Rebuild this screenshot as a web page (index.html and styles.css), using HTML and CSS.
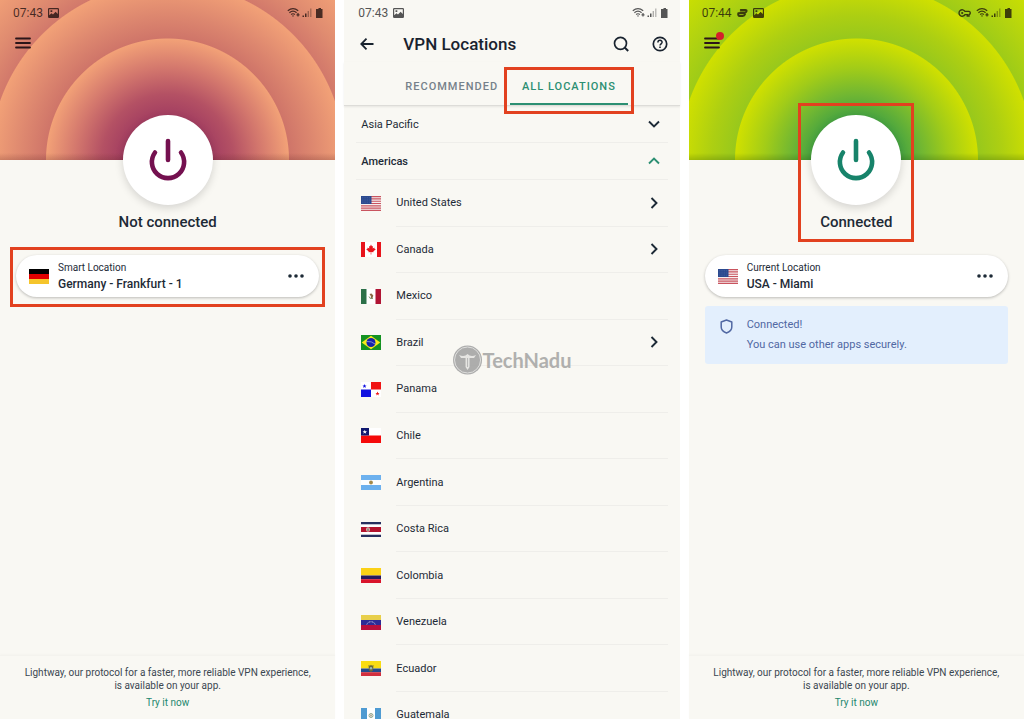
FILE: index.html
```html
<!DOCTYPE html>
<html lang="en">

<head>
    <meta charset="UTF-8">
    <meta name="viewport" content="width=device-width, initial-scale=1.0">
    <title>VPN Locations</title>
    <link rel="stylesheet" href="styles.css">
</head>

<body>
    <!-- Shared icons -->
    <svg class="sprite" aria-hidden="true">
        <symbol id="picture" viewBox="0 0 11 10">
            <path fill="currentColor" fill-rule="evenodd" d="M1.2 0H9.8Q11 0 11 1.200V8.800Q11 10 9.800 10H1.200Q0 10 0 8.800V1.200Q0 0 1.200 0ZM1.200 1.200V7.200L3.500 5.200L5 6.400L7.600 3.800L9.800 6V1.200ZM2.500 2.200H4.300V4H2.500Z" />
        </symbol>
        <symbol id="signals" viewBox="0 0 36 12">
            <g fill="none" stroke="currentColor" stroke-width="1.200">
                <path d="M0.800 3.800Q6 -0.400 11.200 3.800" />
                <path d="M2.400 5.700Q6 2.700 9.600 5.700" />
                <path d="M4.100 7.500Q6 6 7.900 7.500" />
                <path d="M11 6V9.500M9.500 7.800H12.500" />
            </g>
            <path fill="currentColor" d="M5 8.500H7L6 10ZM15.500 8.500H17V10H15.500ZM18 6.500H19.500V10H18Z" />
            <path fill="currentColor" opacity=".45" d="M20.600 4H22V10H20.600ZM23.200 1.500H24.400V10H23.200Z" />
            <path fill="currentColor" d="M30 2H31.500V1H34V2H35.500V11H29V2Z" />
        </symbol>
        <symbol id="menu" viewBox="0 0 16 12">
            <path d="M1 1.500H15M1 6H15M1 10.500H15" stroke="currentColor" stroke-width="1.800" stroke-linecap="round" />
        </symbol>
        <symbol id="power" viewBox="0 0 46 46">
            <path d="M23 4V23M10 15.500A16.100 16.100 0 1 0 36 15.500" fill="none" stroke="currentColor" stroke-width="4.600" stroke-linecap="round" />
        </symbol>
        <symbol id="dots" viewBox="0 0 16 4">
            <g fill="currentColor">
                <circle cx="2" cy="2" r="1.800" />
                <circle cx="8" cy="2" r="1.800" />
                <circle cx="14" cy="2" r="1.800" />
            </g>
        </symbol>
        <symbol id="right" viewBox="0 0 8 12">
            <path d="M1.500 1L6.500 6L1.500 11" fill="none" stroke="currentColor" stroke-width="1.900" />
        </symbol>
        <symbol id="down" viewBox="0 0 12 8">
            <path d="M1 1.500L6 6.500L11 1.500" fill="none" stroke="currentColor" stroke-width="1.900" />
        </symbol>
        <symbol id="flag-us" viewBox="0 0 20 15">
            <path fill="#f5eeee" d="M0 0H20V15H0Z" />
            <path stroke="#c9545f" stroke-width="1.150" d="M0 .6H20M0 2.900H20M0 5.200H20M0 7.500H20M0 9.800H20M0 12.100H20M0 14.400H20" />
            <path fill="#2b4a8f" d="M0 0H10.500V8H0Z" />
            <path stroke="#6079b0" stroke-width=".5" stroke-dasharray=".6 1.200" d="M1 1.500H10M1 3.200H10M1 4.900H10M1 6.600H10" />
        </symbol>
    </svg>

    <main class="screens">
        <section class="phone">
            <header class="hero hero-off">
                <div class="status">
                    <span>07:43</span>
                    <svg class="icon-picture"><use href="#picture" /></svg>
                    <svg class="icon-signals"><use href="#signals" /></svg>
                </div>
                <button class="menu" aria-label="Menu"><svg><use href="#menu" /></svg></button>
            </header>
            <div class="connection">
                <button class="power power-off" aria-label="Connect"><svg><use href="#power" /></svg></button>
                <h1>Not connected</h1>
            </div>
            <div class="location marked">
                <svg class="flag" viewBox="0 0 20 15">
                    <path fill="#000" d="M0 0H20V5H0Z" />
                    <path fill="#e00000" d="M0 5H20V10H0Z" />
                    <path fill="#f5c52c" d="M0 10H20V15H0Z" />
                </svg>
                <div class="place">
                    <span>Smart Location</span>
                    <strong>Germany - Frankfurt - 1</strong>
                </div>
                <button class="more" aria-label="More options"><svg><use href="#dots" /></svg></button>
            </div>
            <footer class="promo">
                <p>Lightway, our protocol for a faster, more reliable VPN experience, is available on your app.</p>
                <a href="#">Try it now</a>
            </footer>
        </section>

        <section class="phone">
            <div class="status status-light">
                <span>07:43</span>
                <svg class="icon-picture"><use href="#picture" /></svg>
                <svg class="icon-signals"><use href="#signals" /></svg>
            </div>
            <header class="appbar">
                <button aria-label="Back">
                    <svg class="icon-back" viewBox="0 0 14 12"><path d="M6.500 .7L1.300 6L6.500 11.300M1.300 6H13.500" fill="none" stroke="currentColor" stroke-width="1.800" /></svg>
                </button>
                <h2>VPN Locations</h2>
                <button aria-label="Search">
                    <svg class="icon-round" viewBox="0 0 16 16">
                        <circle cx="7.500" cy="7.300" r="6" fill="none" stroke="currentColor" stroke-width="1.700" />
                        <path d="M11.700 11.500L15.200 15" stroke="currentColor" stroke-width="1.900" />
                    </svg>
                </button>
                <button aria-label="Help">
                    <svg class="icon-round" viewBox="0 0 16 16">
                        <circle cx="8" cy="8" r="6.700" fill="none" stroke="currentColor" stroke-width="1.700" />
                        <path d="M5.900 6.500C5.900 3.600 10.200 3.700 10.100 6.300C10 7.800 8 7.900 8 9.600" fill="none" stroke="currentColor" stroke-width="1.500" />
                        <path fill="currentColor" d="M7.200 10.500H8.800V12H7.200Z" />
                    </svg>
                </button>
            </header>
            <nav class="tabs" role="tablist">
                <button role="tab" aria-selected="false">RECOMMENDED</button>
                <button class="active marked" role="tab" aria-selected="true">ALL LOCATIONS</button>
            </nav>
            <button class="region" aria-expanded="false">Asia Pacific <svg><use href="#down" /></svg></button>
            <button class="region open" aria-expanded="true">Americas <svg><use href="#down" /></svg></button>
            <ul class="countries">
                <li>
                    <svg class="flag"><use href="#flag-us" /></svg>
                    <button>United States <svg><use href="#right" /></svg></button>
                </li>
                <li>
                    <svg class="flag" viewBox="0 0 20 15">
                        <path fill="#fff" d="M0 0H20V15H0Z" />
                        <path fill="#e8141c" d="M0 0H4V15H0ZM16 0H20V15H16ZM10 2.500L11 4.500L12 4L11.700 6.500L13.500 5.500L13.300 6.500L14.800 7.200L12.300 9.500L12.500 10.300L10.300 10V12.500H9.700V10L7.500 10.300L7.700 9.500L5.200 7.200L6.700 6.500L6.500 5.500L8.300 6.500L8 4L9 4.500Z" />
                    </svg>
                    <button>Canada <svg><use href="#right" /></svg></button>
                </li>
                <li>
                    <svg class="flag" viewBox="0 0 20 15">
                        <path fill="#fff" d="M0 0H20V15H0Z" />
                        <path fill="#2c7048" d="M0 0H5.500V15H0Z" />
                        <path fill="#b01534" d="M14.500 0H20V15H14.500Z" />
                        <path fill="#8a6a45" d="M8.500 5L10.500 4.500L12.300 6.500L11.500 9L9.500 9.500L10 7.500Z" />
                        <path d="M8 7.500Q8.500 10.500 12 9.500" fill="none" stroke="#77916b" stroke-width=".9" />
                    </svg>
                    <button>Mexico</button>
                </li>
                <li>
                    <svg class="flag" viewBox="0 0 20 15">
                        <path fill="#149222" d="M0 0H20V15H0Z" />
                        <path fill="#f7ea1c" d="M10 .8L19.300 7.500L10 14.200L.7 7.500Z" />
                        <circle cx="10" cy="7.500" r="4.500" fill="#1623ad" />
                        <path d="M5.800 6.500Q10.500 6 14 9" fill="none" stroke="#a9b8e8" stroke-width=".7" />
                    </svg>
                    <button>Brazil <svg><use href="#right" /></svg></button>
                </li>
                <li>
                    <svg class="flag" viewBox="0 0 20 15">
                        <path fill="#fff" d="M0 0H20V15H0Z" />
                        <path fill="#f01414" d="M10 0H20V7.500H10ZM16.500 9.500L17.100 11H18.500L17.400 12L17.800 13.500L16.500 12.600L15.200 13.500L15.600 12L14.500 11H15.900Z" />
                        <path fill="#1111e0" d="M0 7.500H10V15H0ZM3.500 2L4.100 3.500H5.500L4.400 4.400L4.800 6L3.500 5L2.200 6L2.600 4.400L1.500 3.500H2.900Z" />
                    </svg>
                    <button>Panama</button>
                </li>
                <li>
                    <svg class="flag" viewBox="0 0 20 15">
                        <path fill="#fff" d="M0 0H20V7.500H0Z" />
                        <path fill="#f50a0a" d="M0 7.500H20V15H0Z" />
                        <path fill="#10186f" d="M0 0H8V7.500H0Z" />
                        <path fill="#fff" d="M3.800 1.700L4.400 3.200H6L4.800 4.200L5.200 5.700L3.800 4.800L2.400 5.700L2.800 4.200L1.600 3.200H3.200Z" />
                    </svg>
                    <button>Chile</button>
                </li>
                <li>
                    <svg class="flag" viewBox="0 0 20 15">
                        <path fill="#6db1ee" d="M0 0H20V15H0Z" />
                        <path fill="#fff" d="M0 5H20V10H0Z" />
                        <circle cx="10" cy="7.500" r="1.900" fill="#a58a4a" />
                    </svg>
                    <button>Argentina</button>
                </li>
                <li>
                    <svg class="flag" viewBox="0 0 20 15">
                        <path fill="#26305f" d="M0 0H20V15H0Z" />
                        <path fill="#fff" d="M0 2.300H20V12.700H0Z" />
                        <path fill="#b3142e" d="M0 5H20V10H0Z" />
                        <ellipse cx="7" cy="7.500" rx="2" ry="2.200" fill="#d9b3b3" />
                        <path fill="#7b7a63" d="M6.300 6.500H7.700V9H6.300Z" />
                    </svg>
                    <button>Costa Rica</button>
                </li>
                <li>
                    <svg class="flag" viewBox="0 0 20 15">
                        <path fill="#fbd116" d="M0 0H20V7.500H0Z" />
                        <path fill="#261a5e" d="M0 7.500H20V11.200H0Z" />
                        <path fill="#d9142b" d="M0 11.200H20V15H0Z" />
                    </svg>
                    <button>Colombia</button>
                </li>
                <li>
                    <svg class="flag" viewBox="0 0 20 15">
                        <path fill="#e8cf4a" d="M0 0H20V5H0Z" />
                        <path fill="#2d2b96" d="M0 5H20V10H0Z" />
                        <path fill="#b80f3c" d="M0 10H20V15H0Z" />
                        <path d="M5.800 9.500A4.300 3.500 0 0 1 14.200 9.500" fill="none" stroke="#cfcfe8" stroke-width="1" stroke-dasharray="1 .6" />
                    </svg>
                    <button>Venezuela</button>
                </li>
                <li>
                    <svg class="flag" viewBox="0 0 20 15">
                        <path fill="#f9dc13" d="M0 0H20V7.500H0Z" />
                        <path fill="#234a8c" d="M0 7.500H20V11.200H0Z" />
                        <path fill="#d22f3e" d="M0 11.200H20V15H0Z" />
                        <path fill="#6a6a3c" d="M7.500 4L9 4.700L10 3.800L11 4.700L12.500 4L12 9.500L10 11L8 9.500Z" />
                        <circle cx="10" cy="7.300" r="1.200" fill="#9dbcae" />
                    </svg>
                    <button>Ecuador</button>
                </li>
                <li>
                    <svg class="flag" viewBox="0 0 20 15">
                        <path fill="#4f9bd2" d="M0 0H20V15H0Z" />
                        <path fill="#fff" d="M6 0H14V15H6Z" />
                        <circle cx="10" cy="7.500" r="2" fill="none" stroke="#8fa58a" stroke-width="1" />
                        <path fill="#9a8a70" d="M9.300 6.500H10.700V8.500H9.300Z" />
                    </svg>
                    <button>Guatemala</button>
                </li>
            </ul>
        </section>

        <section class="phone">
            <header class="hero hero-on">
                <div class="status">
                    <span>07:44</span>
                    <svg class="icon-picture" viewBox="0 0 11 10">
                        <path d="M3.800 1.900H8.300Q9.800 1.900 9.500 3.200T7.500 4.500H3.500M1.300 5.300H7.500M1.300 5.300Q.8 7.900 2.700 7.900H5.800Q7.500 7.900 8 6.300" fill="none" stroke="currentColor" stroke-width="2" stroke-linecap="round" />
                    </svg>
                    <svg class="icon-picture"><use href="#picture" /></svg>
                    <svg class="icon-key" viewBox="0 0 13 10">
                        <path d="M7 3.400A3.200 3.200 0 1 0 7 6.600H9.300V8H11V6.600Q12.300 6.300 12.300 5T11 3.400Z" fill="none" stroke="currentColor" stroke-width="1.400" />
                        <circle cx="4.200" cy="5" r="1.100" fill="currentColor" />
                    </svg>
                    <svg class="icon-signals"><use href="#signals" /></svg>
                </div>
                <button class="menu has-news" aria-label="Menu"><svg><use href="#menu" /></svg></button>
            </header>
            <div class="connection marked">
                <button class="power power-on" aria-label="Disconnect"><svg><use href="#power" /></svg></button>
                <h1>Connected</h1>
            </div>
            <div class="location">
                <svg class="flag"><use href="#flag-us" /></svg>
                <div class="place">
                    <span>Current Location</span>
                    <strong>USA - Miami</strong>
                </div>
                <button class="more" aria-label="More options"><svg><use href="#dots" /></svg></button>
            </div>
            <div class="notice">
                <svg viewBox="0 0 13 15">
                    <path d="M6.500 1L11.800 3V8Q11.800 12 6.500 14Q1.200 12 1.200 8V3Z" fill="none" stroke="currentColor" stroke-width="1.500" stroke-linejoin="round" />
                </svg>
                <div>
                    <p>Connected!</p>
                    <p>You can use other apps securely.</p>
                </div>
            </div>
            <footer class="promo">
                <p>Lightway, our protocol for a faster, more reliable VPN experience, is available on your app.</p>
                <a href="#">Try it now</a>
            </footer>
        </section>

        <div class="watermark">
            <svg viewBox="0 0 30 30">
                <circle cx="15" cy="15" r="14.500" fill="#a5a5a5" />
                <circle cx="15" cy="15" r="13" fill="none" stroke="#dcdcda" stroke-width="1" />
                <path fill="#e4e4e1" d="M6.500 10Q10 11.500 13 10.500L15 9L17 10.500Q20 11.500 23.500 10L21.500 13H17V22L15 25L13 22V13H8.500Z" />
                <path d="M9 14.500H12.500M17.500 14.500H21M15 13V22" stroke="#a5a5a5" stroke-width=".8" />
            </svg>
            <span>TechNadu</span>
        </div>
    </main>
</body>

</html>
```
FILE: styles.css
```css
* {
    box-sizing: border-box;
    margin: 0;
    padding: 0;
}

body {
    background: #fff;
    color: #1d2a36;
    font-family: Roboto, 'Liberation Sans', sans-serif;
    font-size: 11px;
}

button {
    background: none;
    border: none;
    color: inherit;
    font: inherit;
    cursor: pointer;
}

svg {
    display: block;
    flex: none;
}

.sprite {
    width: 0;
    height: 0;
    position: absolute;
}

.screens {
    position: relative;
    display: grid;
    grid-template-columns: repeat(3, 1fr);
    gap: 9px;
    height: 100vh;
    overflow: hidden;
}

.phone {
    display: flex;
    flex-direction: column;
    min-width: 0;
    min-height: 0;
    background: #f9f8f3;
}

/* Status bar */
.status {
    display: flex;
    align-items: center;
    height: 26px;
    padding: 0 12px 0 13px;
    gap: 5px;
    font-size: 12px;
    color: rgba(20, 10, 10, 0.75);
}

.status-light {
    padding-left: 14px;
    color: #555;
}

.icon-picture {
    width: 11px;
    height: 10px;
}

.icon-key {
    width: 13px;
    height: 10px;
    margin-left: auto;
}

.icon-signals {
    width: 36px;
    height: 12px;
    margin-left: auto;
}

.icon-key + .icon-signals {
    margin-left: 0;
}

/* Connect screens */
.hero {
    height: 160px;
    flex: none;
}

.hero-off {
    background:
        linear-gradient(to top, rgba(90, 30, 30, 0.22), transparent 7px),
        radial-gradient(circle at 50% 100%, #8c2858 0, #9f3a60 40px, #b45164 66px, #d3776d 92px, #f2a177 121px,
            #cf7569 122px, #dd876f 145px, #f2a177 177px,
            #d2796b 178px, #e08c70 202px, #f2a177 236px);
}

.hero-on {
    background:
        linear-gradient(to top, rgba(30, 70, 0, 0.22), transparent 7px),
        radial-gradient(circle at 50% 100%, #2a9048 0, #46a341 44px, #71b732 66px, #a2cc18 92px, #d0e000 121px,
            #98c81c 122px, #adcf12 145px, #d0e000 177px,
            #9ecb18 178px, #b2d310 202px, #cce000 236px);
}

.menu {
    position: relative;
    display: block;
    margin-left: 15px;
    padding: 11px 0;
}

.menu svg {
    width: 16px;
    height: 12px;
    color: #2b1519;
}

.has-news::after {
    content: '';
    position: absolute;
    top: 6px;
    right: -4px;
    width: 8px;
    height: 8px;
    border-radius: 50%;
    background: #d3202c;
}

.connection {
    position: relative;
    align-self: center;
    display: flex;
    flex-direction: column;
    align-items: center;
    margin-top: -45px;
}

.power {
    display: flex;
    align-items: center;
    justify-content: center;
    width: 90px;
    height: 90px;
    border-radius: 50%;
    background: #fff;
    box-shadow: 0 3px 8px rgba(0, 0, 0, 0.15);
}

.power svg {
    width: 46px;
    height: 46px;
}

.power-off {
    color: #74104f;
}

.power-on {
    color: #17836a;
}

h1 {
    margin-top: 7px;
    font-size: 15px;
    font-weight: 500;
    line-height: 20px;
}

.location {
    position: relative;
    display: flex;
    align-items: center;
    height: 42px;
    margin: 23px 16px 0;
    padding: 0 15px 0 13px;
    border-radius: 21px;
    background: #fff;
    box-shadow: 0 1px 3px rgba(0, 0, 0, 0.25);
}

.flag {
    width: 20px;
    height: 15px;
}

.place {
    display: flex;
    flex-direction: column;
    flex: 1;
    padding-left: 9px;
    line-height: 17px;
}

.place span {
    font-size: 10px;
}

.place strong {
    font-size: 12px;
    font-weight: 500;
}

.more svg {
    width: 16px;
    height: 4px;
}

.notice {
    display: flex;
    gap: 14px;
    margin: 9px 16px 0;
    padding: 9px 15px;
    border-radius: 3px;
    background: #e3effd;
    color: #5168a3;
    line-height: 20px;
}

.notice svg {
    width: 13px;
    height: 15px;
    margin-top: 4px;
}

.promo {
    margin-top: auto;
    padding: 10px 24px;
    border-top: 1px solid #f4f3ee;
    box-shadow: 0 -1px 2px rgba(0, 0, 0, 0.02);
    font-size: 10px;
    line-height: 13px;
    text-align: center;
    color: #3b4751;
}

.promo a {
    display: block;
    margin-top: 4px;
    color: #23876e;
    text-decoration: none;
}

/* Locations screen */
.appbar {
    display: flex;
    align-items: center;
    gap: 23px;
    height: 36px;
    flex: none;
    padding: 0 12px 0 16px;
    color: #19232f;
}

.appbar h2 {
    flex: 1;
    padding-left: 6px;
    font-size: 17px;
    font-weight: 500;
}

.icon-back {
    width: 14px;
    height: 12px;
}

.icon-round {
    width: 16px;
    height: 16px;
}

.tabs {
    display: flex;
    height: 44px;
    flex: none;
    padding-left: 49px;
    border-bottom: 1px solid #dddcd8;
    box-shadow: 0 1px 2px rgba(0, 0, 0, 0.08);
}

.tabs button {
    position: relative;
    padding: 8px 12px 0;
    border-bottom: 2px solid transparent;
    font-weight: 500;
    letter-spacing: 1px;
    color: #76818a;
}

.tabs .active {
    border-color: #2c8f72;
    color: #2c8f72;
}

.region {
    display: flex;
    align-items: center;
    justify-content: space-between;
    height: 37px;
    flex: none;
    margin: 0 12px;
    padding: 0 8px 0 5px;
    border-bottom: 1px solid #efeeea;
}

.region svg {
    width: 12px;
    height: 8px;
}

.region.open {
    font-weight: 500;
}

.region.open svg {
    color: #2c8f72;
    transform: rotate(180deg);
}

/* The last row runs off the bottom edge of the screen */
.countries {
    display: grid;
    grid-template-rows: repeat(11, 1fr) 27px;
    flex: 1;
    min-height: 0;
    padding: 0 12px 0 17px;
    list-style: none;
}

.countries li {
    display: flex;
    align-items: center;
    gap: 15px;
}

.countries li:last-child {
    height: 46px;
}

.countries button {
    display: flex;
    align-items: center;
    justify-content: space-between;
    flex: 1;
    align-self: stretch;
    padding-right: 10px;
    border-bottom: 1px solid #efeeea;
}

.countries button svg {
    width: 8px;
    height: 12px;
}

/* Red callout frames */
.marked::before {
    content: '';
    position: absolute;
    border: 3px solid #e2411f;
    pointer-events: none;
}

.location.marked::before {
    inset: -8px -6px -10px;
}

.tabs .marked::before {
    inset: 5px -6px -11px;
}

.connection.marked::before {
    inset: -12px -13px -10px;
}

.watermark {
    position: absolute;
    top: 50%;
    left: 50%;
    display: flex;
    align-items: center;
    transform: translate(-50%, -50%);
    color: #a9a9a7;
    font-family: Lato, sans-serif;
    font-size: 20px;
    font-weight: 700;
    opacity: 0.9;
}

.watermark svg {
    width: 30px;
    height: 30px;
}
```
